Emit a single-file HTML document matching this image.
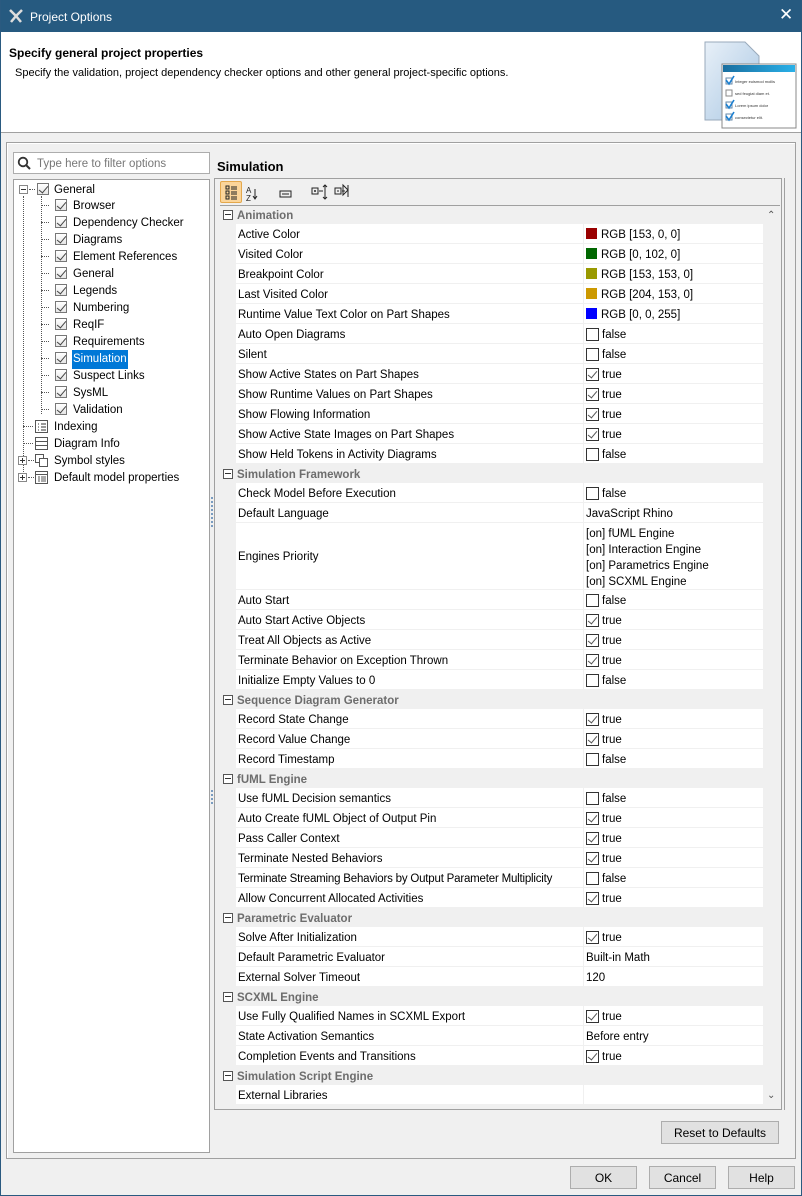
<!DOCTYPE html>
<html><head><meta charset="utf-8"><style>
*{box-sizing:border-box;margin:0;padding:0}
body{width:802px;height:1196px;background:#f0f0f0;font-family:"Liberation Sans",sans-serif;font-size:11.5px;color:#000;position:relative;overflow:hidden}
.a{position:absolute}
#win{left:0;top:0;width:802px;height:1196px;border:1px solid #2a5a80;border-top:none}
#tb{left:0;top:0;width:802px;height:32px;background:#265a80;color:#fff;font-size:12px}
#hdr{left:1px;top:32px;width:800px;height:101px;background:#fff;border-bottom:1px solid #a0a0a0}
.cb{position:absolute;width:13px;height:13px;border:1px solid #333;background:#fff}
.cb.on::after{content:"";position:absolute;left:3px;top:0px;width:4px;height:8px;border:solid #555;border-width:0 1.5px 1.5px 0;transform:rotate(40deg)}
.tcb{position:absolute;width:12px;height:12px;border:1px solid #777;background:linear-gradient(#fff,#e6e6e6)}
.tcb::after{content:"";position:absolute;left:3px;top:0;width:4px;height:8px;border:solid #444;border-width:0 1.3px 1.3px 0;transform:rotate(40deg)}
.tr{position:absolute;height:17px;line-height:19px;white-space:nowrap}
.row{position:absolute;left:236px;width:527px;background:#fff;border-bottom:1px solid #f0f0f0}
.row .n{position:absolute;left:2px;top:0;line-height:22px;white-space:nowrap}
.row .v{position:absolute;left:347px;top:0;bottom:0;width:180px;border-left:1px solid #f0f0f0;line-height:22px;padding-left:2px;white-space:nowrap}
.grp{position:absolute;left:220px;width:543px;height:19px;line-height:22px;font-weight:bold;color:#6d6d6d}
.grp .m{position:absolute;left:3px;top:5px;width:10px;height:10px;border:1px solid #555;background:#fff}
.grp .m::after{content:"";position:absolute;left:1px;top:3px;width:6px;height:1px;background:#333}
.grp span{position:absolute;left:17px}
.sw{display:inline-block;width:11px;height:11px;vertical-align:-1px;margin-right:4px}
.btn{position:absolute;height:23px;border:1px solid #adadad;background:#e1e1e1;text-align:center;line-height:23px;font-size:12px}
.dot{position:absolute;border-left:1px dotted #555}
.hd{position:absolute;border-top:1px dotted #555}
.pm{position:absolute;width:9px;height:9px;border:1px solid #888;background:#fff}
.pm::before{content:"";position:absolute;left:1px;top:3px;width:5px;height:1px;background:#333}
.pm.p::after{content:"";position:absolute;left:3px;top:1px;width:1px;height:5px;background:#333}
</style></head><body>
<div id="tb" class="a">
 <svg class="a" style="left:8px;top:8px" width="16" height="16"><path d="M2 2 L8 8 L14 2 M8 8 L3 14 M8 8 L13 14" stroke="#ddd" stroke-width="2.5" fill="none"/></svg>
 <div class="a" style="left:30px;top:10px">Project Options</div>
 <div class="a" style="left:779px;top:5px;font-size:17px">✕</div>
</div>
<div id="win" class="a"></div>
<div id="hdr" class="a">
 <div class="a" style="left:8px;top:14px;font-weight:bold;font-size:12px">Specify general project properties</div>
 <div class="a" style="left:14px;top:35px;font-size:11px">Specify the validation, project dependency checker options and other general project-specific options.</div>
 <svg class="a" style="left:702px;top:6px" width="98" height="92">
  <defs><linearGradient id="g" x1="0" y1="0" x2="1" y2="1"><stop offset="0" stop-color="#e8f0f8"/><stop offset="1" stop-color="#a9c7e3"/></linearGradient><linearGradient id="b" x1="0" x2="1"><stop offset="0" stop-color="#1a6fa0"/><stop offset="1" stop-color="#2ab0e8"/></linearGradient></defs>
  <path d="M2 4 H42 L56 18 V82 H2 Z" fill="url(#g)" stroke="#9ab" />
  <rect x="19" y="26" width="74" height="64" fill="#fff" stroke="#888"/>
  <rect x="20" y="27" width="72" height="7" fill="url(#b)"/>
  <g font-size="4" fill="#333" font-family="Liberation Sans">
  <rect x="23" y="40" width="6" height="6" fill="#fff" stroke="#68a"/><text x="32" y="45">Integer euismod mollis</text>
  <rect x="23" y="52" width="6" height="6" fill="#fff" stroke="#888"/><text x="32" y="57">sed feugiat diam et.</text>
  <rect x="23" y="64" width="6" height="6" fill="#fff" stroke="#68a"/><text x="32" y="69">Lorem ipsum dolor</text>
  <rect x="23" y="76" width="6" height="6" fill="#fff" stroke="#68a"/><text x="32" y="81">consectetur elit.</text>
  <path d="M23 42 l3 4 l5 -8 M23 66 l3 4 l5 -8 M23 78 l3 4 l5 -8" stroke="#1a7fd0" stroke-width="1.6" fill="none"/></g>
 </svg>
</div>
<div class="a" style="left:6px;top:142px;width:790px;height:1017px;border:1px solid #a0a0a0;box-shadow:inset 1px 1px 0 #fff"></div>
<div class="a" style="left:13px;top:152px;width:197px;height:22px;border:1px solid #adadad;background:#fff">
 <svg class="a" style="left:3px;top:3px" width="14" height="14"><circle cx="6" cy="6" r="4.3" stroke="#333" stroke-width="1.8" fill="none"/><path d="M9 9 L13 13" stroke="#333" stroke-width="2"/></svg>
 <div class="a" style="left:23px;top:5px;color:#777;font-size:11.5px">Type here to filter options</div>
</div>
<div class="a" style="left:13px;top:179px;width:197px;height:974px;border:1px solid #a0a0a0;background:#fff">
 <div class="dot" style="left:27px;top:16px;height:218px"></div>
 <div class="dot" style="left:9px;top:16px;height:282px"></div>
 <div class="pm" style="left:5px;top:5px"></div>
 <div class="hd" style="left:15px;top:9px;width:6px"></div>
 <div class="tcb" style="left:23px;top:3px"></div>
 <div class="tr" style="left:40px;top:1px">General</div>
</div>
<div class="a" style="left:217px;top:159px;font-weight:bold;font-size:13px">Simulation</div>
<div class="a" style="left:214px;top:178px;width:568px;height:932px;border:1px solid #a0a0a0"></div>
<div class="a" style="left:784px;top:178px;width:1px;height:932px;background:#a0a0a0"></div>
<div class="a" style="left:220px;top:181px;width:22px;height:22px;background:#fbd59a;border:1px solid #e4a84c;border-radius:2px"></div>
<svg class="a" style="left:220px;top:181px" width="160" height="24" fill="none" stroke="#222">
 <g stroke-width="1"><path d="M6 5h3v3h-3z M6 10h3v3h-3z M6 15h3v3h-3z M11 6h6 M11 8h6 M11 11h6 M11 13h6 M11 16h6 M11 18h6"/></g>
 <text x="26" y="12" font-size="8" fill="#222" stroke="none" font-family="Liberation Sans">A</text><text x="26" y="20" font-size="8" fill="#222" stroke="none" font-family="Liberation Sans">Z</text>
 <path d="M35 8v10 M33 15l2 3l2-3"/>
 <rect x="60" y="10" width="11" height="6"/><path d="M62 13h7"/>
 <rect x="92" y="7" width="6" height="6"/><path d="M94 10h2 M95 9v2 M99 10h4 M103 6l2 -2l2 2 M105 4v14 M103 16l2 2l2-2"/>
 <rect x="115" y="7" width="6" height="6"/><path d="M117 10h2 M122 10h3 M123 4l5 5l-5 5z M128 4v12"/>
</svg>
<div class="a" style="left:220px;top:205px;width:560px;height:901px;background:#f0f0f0;border-top:1px solid #a0a0a0"></div>
<div class="a" style="left:767px;top:210px;font-size:10px;color:#555">&#8963;</div>
<div class="a" style="left:767px;top:1090px;font-size:10px;color:#555">&#8964;</div>
<div class="btn" style="left:661px;top:1121px;width:118px">Reset to Defaults</div>
<div class="btn" style="left:570px;top:1166px;width:67px">OK</div>
<div class="btn" style="left:649px;top:1166px;width:67px">Cancel</div>
<div class="btn" style="left:728px;top:1166px;width:67px">Help</div>
<div class="a" style="left:211px;top:497px;width:2px;height:30px;border-left:2px dotted #7a9cc0"></div>
<div class="a" style="left:211px;top:790px;width:2px;height:14px;border-left:2px dotted #7a9cc0"></div>

<div class="a" style="left:13px;top:179px">
 <div class="hd" style="left:28px;top:26px;width:8px"></div><div class="tcb" style="left:42px;top:20px"></div><div class="tr" style="left:60px;top:18px">Browser</div>
 <div class="hd" style="left:28px;top:43px;width:8px"></div><div class="tcb" style="left:42px;top:37px"></div><div class="tr" style="left:60px;top:35px">Dependency Checker</div>
 <div class="hd" style="left:28px;top:60px;width:8px"></div><div class="tcb" style="left:42px;top:54px"></div><div class="tr" style="left:60px;top:52px">Diagrams</div>
 <div class="hd" style="left:28px;top:77px;width:8px"></div><div class="tcb" style="left:42px;top:71px"></div><div class="tr" style="left:60px;top:69px">Element References</div>
 <div class="hd" style="left:28px;top:94px;width:8px"></div><div class="tcb" style="left:42px;top:88px"></div><div class="tr" style="left:60px;top:86px">General</div>
 <div class="hd" style="left:28px;top:111px;width:8px"></div><div class="tcb" style="left:42px;top:105px"></div><div class="tr" style="left:60px;top:103px">Legends</div>
 <div class="hd" style="left:28px;top:128px;width:8px"></div><div class="tcb" style="left:42px;top:122px"></div><div class="tr" style="left:60px;top:120px">Numbering</div>
 <div class="hd" style="left:28px;top:145px;width:8px"></div><div class="tcb" style="left:42px;top:139px"></div><div class="tr" style="left:60px;top:137px">ReqIF</div>
 <div class="hd" style="left:28px;top:162px;width:8px"></div><div class="tcb" style="left:42px;top:156px"></div><div class="tr" style="left:60px;top:154px">Requirements</div>
 <div class="hd" style="left:28px;top:179px;width:8px"></div><div class="tcb" style="left:42px;top:173px"></div><div class="tr" style="left:59px;top:171px;height:19px;background:#0078d7;color:#fff;padding:0 1px">Simulation</div>
 <div class="hd" style="left:28px;top:196px;width:8px"></div><div class="tcb" style="left:42px;top:190px"></div><div class="tr" style="left:60px;top:188px">Suspect Links</div>
 <div class="hd" style="left:28px;top:213px;width:8px"></div><div class="tcb" style="left:42px;top:207px"></div><div class="tr" style="left:60px;top:205px">SysML</div>
 <div class="hd" style="left:28px;top:230px;width:8px"></div><div class="tcb" style="left:42px;top:224px"></div><div class="tr" style="left:60px;top:222px">Validation</div>
 <div class="hd" style="left:10px;top:247px;width:10px"></div>
 <svg class="a" style="left:22px;top:241px" width="13" height="13"><rect x="0.5" y="0.5" width="12" height="12" fill="#fff" stroke="#555"/><path d="M3 4h1M3 7h1M3 10h1M6 4h5M6 7h5M6 10h5" stroke="#333"/></svg>
 <div class="tr" style="left:41px;top:239px">Indexing</div>
 <div class="hd" style="left:10px;top:264px;width:10px"></div>
 <svg class="a" style="left:22px;top:258px" width="13" height="13"><rect x="0.5" y="0.5" width="12" height="12" fill="#fff" stroke="#555"/><path d="M1 4.5h11M1 8.5h11" stroke="#555"/></svg>
 <div class="tr" style="left:41px;top:256px">Diagram Info</div>
 <div class="pm p" style="left:5px;top:277px"></div><div class="hd" style="left:15px;top:281px;width:6px"></div>
 <svg class="a" style="left:22px;top:275px" width="13" height="13"><rect x="0.5" y="0.5" width="8" height="8" fill="#fff" stroke="#555"/><rect x="4.5" y="4.5" width="8" height="8" fill="#fff" stroke="#555"/></svg>
 <div class="tr" style="left:41px;top:273px">Symbol styles</div>
 <div class="pm p" style="left:5px;top:294px"></div><div class="hd" style="left:15px;top:298px;width:6px"></div>
 <svg class="a" style="left:22px;top:292px" width="13" height="13"><rect x="0.5" y="0.5" width="12" height="12" fill="#fff" stroke="#555"/><path d="M1 3.5h11M3 6h2M3 8h2M3 10h2M6 6h5M6 8h5M6 10h5" stroke="#555"/></svg>
 <div class="tr" style="left:41px;top:290px">Default model properties</div>
</div>

<div class="grp" style="top:205px"><div class="m"></div><span>Animation</span></div>
<div class="row" style="top:224px;height:20px"><div class="n">Active Color</div><div class="v"><span class="sw" style="background:#990000"></span>RGB [153, 0, 0]</div></div>
<div class="row" style="top:244px;height:20px"><div class="n">Visited Color</div><div class="v"><span class="sw" style="background:#006600"></span>RGB [0, 102, 0]</div></div>
<div class="row" style="top:264px;height:20px"><div class="n">Breakpoint Color</div><div class="v"><span class="sw" style="background:#999900"></span>RGB [153, 153, 0]</div></div>
<div class="row" style="top:284px;height:20px"><div class="n">Last Visited Color</div><div class="v"><span class="sw" style="background:#cc9900"></span>RGB [204, 153, 0]</div></div>
<div class="row" style="top:304px;height:20px"><div class="n">Runtime Value Text Color on Part Shapes</div><div class="v"><span class="sw" style="background:#0000ff"></span>RGB [0, 0, 255]</div></div>
<div class="row" style="top:324px;height:20px"><div class="n">Auto Open Diagrams</div><div class="v"><div class="cb" style="left:2px;top:4px"></div><span style="margin-left:16px">false</span></div></div>
<div class="row" style="top:344px;height:20px"><div class="n">Silent</div><div class="v"><div class="cb" style="left:2px;top:4px"></div><span style="margin-left:16px">false</span></div></div>
<div class="row" style="top:364px;height:20px"><div class="n">Show Active States on Part Shapes</div><div class="v"><div class="cb on" style="left:2px;top:4px"></div><span style="margin-left:16px">true</span></div></div>
<div class="row" style="top:384px;height:20px"><div class="n">Show Runtime Values on Part Shapes</div><div class="v"><div class="cb on" style="left:2px;top:4px"></div><span style="margin-left:16px">true</span></div></div>
<div class="row" style="top:404px;height:20px"><div class="n">Show Flowing Information</div><div class="v"><div class="cb on" style="left:2px;top:4px"></div><span style="margin-left:16px">true</span></div></div>
<div class="row" style="top:424px;height:20px"><div class="n">Show Active State Images on Part Shapes</div><div class="v"><div class="cb on" style="left:2px;top:4px"></div><span style="margin-left:16px">true</span></div></div>
<div class="row" style="top:444px;height:20px"><div class="n">Show Held Tokens in Activity Diagrams</div><div class="v"><div class="cb" style="left:2px;top:4px"></div><span style="margin-left:16px">false</span></div></div>

<div class="grp" style="top:464px"><div class="m"></div><span>Simulation Framework</span></div>
<div class="row" style="top:483px;height:20px"><div class="n">Check Model Before Execution</div><div class="v"><div class="cb" style="left:2px;top:4px"></div><span style="margin-left:16px">false</span></div></div>
<div class="row" style="top:503px;height:20px"><div class="n">Default Language</div><div class="v">JavaScript Rhino</div></div>
<div class="row" style="top:523px;height:67px"><div class="n" style="line-height:68px">Engines Priority</div><div class="v" style="line-height:16px;padding-top:3px">[on] fUML Engine<br>[on] Interaction Engine<br>[on] Parametrics Engine<br>[on] SCXML Engine</div></div>
<div class="row" style="top:590px;height:20px"><div class="n">Auto Start</div><div class="v"><div class="cb" style="left:2px;top:4px"></div><span style="margin-left:16px">false</span></div></div>
<div class="row" style="top:610px;height:20px"><div class="n">Auto Start Active Objects</div><div class="v"><div class="cb on" style="left:2px;top:4px"></div><span style="margin-left:16px">true</span></div></div>
<div class="row" style="top:630px;height:20px"><div class="n">Treat All Objects as Active</div><div class="v"><div class="cb on" style="left:2px;top:4px"></div><span style="margin-left:16px">true</span></div></div>
<div class="row" style="top:650px;height:20px"><div class="n">Terminate Behavior on Exception Thrown</div><div class="v"><div class="cb on" style="left:2px;top:4px"></div><span style="margin-left:16px">true</span></div></div>
<div class="row" style="top:670px;height:20px"><div class="n">Initialize Empty Values to 0</div><div class="v"><div class="cb" style="left:2px;top:4px"></div><span style="margin-left:16px">false</span></div></div>

<div class="grp" style="top:690px"><div class="m"></div><span>Sequence Diagram Generator</span></div>
<div class="row" style="top:709px;height:20px"><div class="n">Record State Change</div><div class="v"><div class="cb on" style="left:2px;top:4px"></div><span style="margin-left:16px">true</span></div></div>
<div class="row" style="top:729px;height:20px"><div class="n">Record Value Change</div><div class="v"><div class="cb on" style="left:2px;top:4px"></div><span style="margin-left:16px">true</span></div></div>
<div class="row" style="top:749px;height:20px"><div class="n">Record Timestamp</div><div class="v"><div class="cb" style="left:2px;top:4px"></div><span style="margin-left:16px">false</span></div></div>

<div class="grp" style="top:769px"><div class="m"></div><span>fUML Engine</span></div>
<div class="row" style="top:788px;height:20px"><div class="n">Use fUML Decision semantics</div><div class="v"><div class="cb" style="left:2px;top:4px"></div><span style="margin-left:16px">false</span></div></div>
<div class="row" style="top:808px;height:20px"><div class="n">Auto Create fUML Object of Output Pin</div><div class="v"><div class="cb on" style="left:2px;top:4px"></div><span style="margin-left:16px">true</span></div></div>
<div class="row" style="top:828px;height:20px"><div class="n">Pass Caller Context</div><div class="v"><div class="cb on" style="left:2px;top:4px"></div><span style="margin-left:16px">true</span></div></div>
<div class="row" style="top:848px;height:20px"><div class="n">Terminate Nested Behaviors</div><div class="v"><div class="cb on" style="left:2px;top:4px"></div><span style="margin-left:16px">true</span></div></div>
<div class="row" style="top:868px;height:20px"><div class="n" style="letter-spacing:-0.2px">Terminate Streaming Behaviors by Output Parameter Multiplicity</div><div class="v" style="background:#fff"><div class="cb" style="left:2px;top:4px"></div><span style="margin-left:16px">false</span></div></div>
<div class="row" style="top:888px;height:20px"><div class="n">Allow Concurrent Allocated Activities</div><div class="v"><div class="cb on" style="left:2px;top:4px"></div><span style="margin-left:16px">true</span></div></div>

<div class="grp" style="top:908px"><div class="m"></div><span>Parametric Evaluator</span></div>
<div class="row" style="top:927px;height:20px"><div class="n">Solve After Initialization</div><div class="v"><div class="cb on" style="left:2px;top:4px"></div><span style="margin-left:16px">true</span></div></div>
<div class="row" style="top:947px;height:20px"><div class="n">Default Parametric Evaluator</div><div class="v">Built-in Math</div></div>
<div class="row" style="top:967px;height:20px"><div class="n">External Solver Timeout</div><div class="v">120</div></div>

<div class="grp" style="top:987px"><div class="m"></div><span>SCXML Engine</span></div>
<div class="row" style="top:1006px;height:20px"><div class="n">Use Fully Qualified Names in SCXML Export</div><div class="v"><div class="cb on" style="left:2px;top:4px"></div><span style="margin-left:16px">true</span></div></div>
<div class="row" style="top:1026px;height:20px"><div class="n">State Activation Semantics</div><div class="v">Before entry</div></div>
<div class="row" style="top:1046px;height:20px"><div class="n">Completion Events and Transitions</div><div class="v"><div class="cb on" style="left:2px;top:4px"></div><span style="margin-left:16px">true</span></div></div>

<div class="grp" style="top:1066px"><div class="m"></div><span>Simulation Script Engine</span></div>
<div class="row" style="top:1085px;height:20px"><div class="n">External Libraries</div><div class="v"></div></div>
</body></html>
